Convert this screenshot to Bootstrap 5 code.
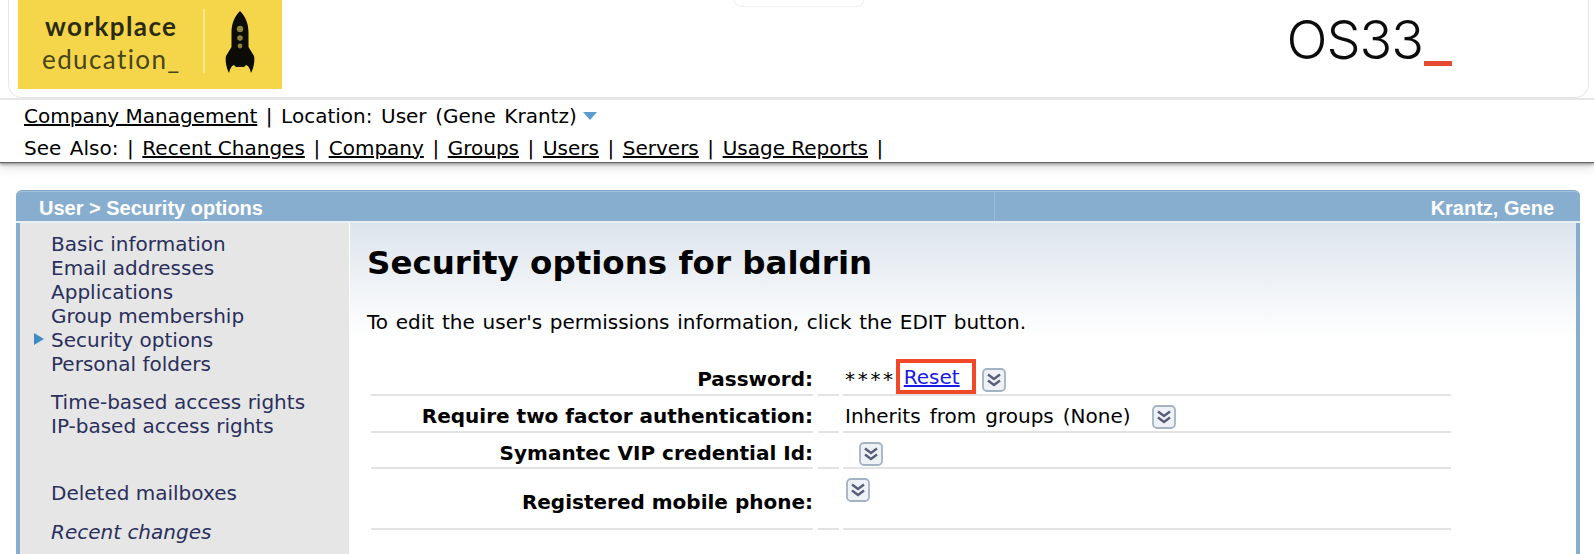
<!DOCTYPE html>
<html lang="en">
<head>
  <meta charset="UTF-8">
  <meta name="viewport" content="width=device-width, initial-scale=1.0">
  <title>Security options</title>
  <link href="https://cdn.jsdelivr.net/npm/bootstrap@5.3.3/dist/css/bootstrap.min.css" rel="stylesheet">
  <style>
    html, body { height: 554px; overflow: hidden; }
    body { font-family: "DejaVu Sans", Verdana, sans-serif; font-size: 20px; color: #000; background: #fff; }
    a { color: inherit; }

    /* logo strip */
    .top-wrap { height: 98px; padding: 0 5px 0 8px; }
    .top-box { height: 98px; border: 1px solid #e6e9e9; border-top: 0; border-radius: 0 0 14px 14px; padding-left: 9px; padding-right: 136px; position: relative; }
    .top-notch { position: absolute; top: 0; left: 725px; width: 130px; height: 7px; border: 1px solid #edf1f1; border-top: 0; border-radius: 0 0 9px 9px; }
    .wp-logo { width: 264px; height: 89px; background: #f5d64b; }
    .wp-words { width: 185px; padding-top: 10px; padding-left: 24px; font-family: Lato, sans-serif; font-size: 26px; line-height: 33px; color: #2b2a12; letter-spacing: 1.4px; white-space: nowrap; }
    .wp-words b { font-weight: 700; display: block; padding-left: 3px; }
    .wp-words span { display: block; color: #4a4517; }
    .wp-bar { width: 2px; height: 64px; margin-top: 9px; background: #fbe88f; }
    .wp-rocket { margin: 11px 0 0 20px; }
    .os-logo { font-family: Inter, "Liberation Sans", sans-serif; font-weight: 300; font-size: 54px; line-height: 1; letter-spacing: -1px; padding-top: 13px; color: #0c0c0c; }
    .os-logo i { display: inline-block; width: 28px; height: 5px; background: #e54b32; margin-left: 1px; vertical-align: -7px; }

    /* nav lines */
    .nav-strip { height: 64px; padding: 1px 0 0 24px; border-top: 2px solid #e6e6e6; box-shadow: 0 1px 1px #666, 0 3px 3px #aaa, 0 7px 10px rgba(0,0,0,.1); line-height: 31.5px; position: relative; word-spacing: 2.2px; white-space: nowrap; }
    .nav-strip a { color: #000; word-spacing: 0; }
    .loc-arrow { display: inline-block; width: 0; height: 0; border-left: 7px solid transparent; border-right: 7px solid transparent; border-top: 8px solid #5a9ccb; margin-left: 6px; vertical-align: 3px; }

    /* panel */
    .main-panel { margin: 28px 14px 0 16px; }
    .panel-title { height: 33px; background: #88aecf; border-top: 1px solid #7ea6c9; border-bottom: 2px solid #e8eff5; border-radius: 6px 6px 0 0; color: #fff; font-family: "Liberation Sans", Arial, sans-serif; font-weight: 700; font-size: 20px; line-height: 34px; box-shadow: inset 0 6px 0 -5px #a5c3dc; }
    .title-left { width: 979px; padding-left: 23px; border-right: 1px solid #9dbcd8; }
    .title-right { flex: 1; text-align: right; padding-right: 26px; }
    .panel-body-row { height: 340px; border-left: 4px solid #88aecf; border-right: 4px solid #88aecf; }
    .side-menu { width: 330px; flex: none; background: #e6e6e6; border-right: 1px solid #fff; padding: 9px 0 0 31px; color: #2a2f5c; line-height: 24px; }
    .side-menu a { display: block; color: #2a2f5c; text-decoration: none; position: relative; }
    .side-menu .is-current::before { content: ""; position: absolute; left: -17px; top: 5px; border-left: 10px solid #3f8cc4; border-top: 6.5px solid transparent; border-bottom: 6.5px solid transparent; }
    .gap-one { margin-top: 14px; }
    .gap-two { margin-top: 43px; }
    .gap-three { margin-top: 15px; }
    .page-area { flex: 1; padding: 20px 0 0 17px; background: linear-gradient(#dce4ec, #fff 115px); }
    .page-area h1 { font-family: "DejaVu Sans", Verdana, sans-serif; font-size: 32.5px; font-weight: 700; line-height: 40px; margin: 0 0 25px; }
    .page-area p { margin: 0 0 24px; line-height: 28px; word-spacing: 1.4px; }

    .perm-row { display: flex; width: 1080px; margin-left: 4px; }
    .perm-label { width: 442px; flex: none; text-align: right; font-weight: 700; border-bottom: 2px solid #e3e3e3; white-space: nowrap; }
    .perm-gap { width: 21px; flex: none; margin-left: 5px; border-bottom: 2px solid #e3e3e3; }
    .perm-value { margin-left: 4px; flex: 1; border-bottom: 2px solid #e3e3e3; padding-left: 2px; white-space: nowrap; word-spacing: 2.7px; }
    .perm-row.r1 { height: 36px; line-height: 38px; }
    .perm-row.r2 { height: 37px; line-height: 40px; }
    .perm-row.r3 { height: 36px; line-height: 40px; }
    .perm-row.r4 { height: 61px; line-height: 66px; }
    .perm-row.r4 .perm-value { line-height: 40px; }
    .stars { letter-spacing: 2.7px; }
    .reset-box { display: inline-block; border: 4px solid #f2482a; height: 35px; width: 80px; padding-left: 4px; line-height: 29px; margin-top: -1px; vertical-align: top; word-spacing: 0; }
    .reset-box a { color: #1a1ae6; }
    .more-btn { display: inline-block; vertical-align: -6px; }
    .pad-btn-z { margin-left: -3px; }
    .pad-btn-a { margin-left: 21px; }
    .pad-btn-b { margin-left: 14px; }
    .pad-btn-c { margin-left: 1px; }
  </style>
</head>
<body>
  <div class="top-wrap">
    <div class="top-box d-flex justify-content-between align-items-start">
      <div class="top-notch"></div>
      <div class="wp-logo d-flex">
        <div class="wp-words"><b>workplace</b><span>education_</span></div>
        <div class="wp-bar"></div>
        <svg class="wp-rocket" width="30" height="62" viewBox="0 0 30 62">
          <path fill="#0b0b08" d="M15 0C9 6 6.500 13 6.500 22v14L1 45c-1 4 0 11 3 17 1-4 2-7 5-8l2 2h8l2-2c3 1 4 4 5 8 3-6 4-13 3-17l-5.500-9V22C23.500 13 21 6 15 0z"/>
          <circle cx="15" cy="18" r="3.200" fill="#8d8338"/>
          <circle cx="15" cy="27" r="2.800" fill="#8d8338"/>
          <circle cx="15" cy="35" r="2.400" fill="#8d8338"/>
        </svg>
      </div>
      <div class="os-logo">OS33<i></i></div>
    </div>
  </div>

  <div class="nav-strip">
    <div><a href="#">Company Management</a> | Location: User (Gene Krantz)<span class="loc-arrow"></span></div>
    <div>See Also: | <a href="#">Recent Changes</a> | <a href="#">Company</a> | <a href="#">Groups</a> | <a href="#">Users</a> | <a href="#">Servers</a> | <a href="#">Usage Reports</a> |</div>
  </div>

  <div class="main-panel">
    <div class="panel-title d-flex">
      <span class="title-left">User &gt; Security options</span>
      <span class="title-right">Krantz, Gene</span>
    </div>
    <div class="panel-body-row d-flex">
      <div class="side-menu">
        <a href="#">Basic information</a>
        <a href="#">Email addresses</a>
        <a href="#">Applications</a>
        <a href="#">Group membership</a>
        <a href="#" class="is-current">Security options</a>
        <a href="#">Personal folders</a>
        <a href="#" class="gap-one">Time-based access rights</a>
        <a href="#">IP-based access rights</a>
        <a href="#" class="gap-two">Deleted mailboxes</a>
        <a href="#" class="gap-three fst-italic">Recent changes</a>
      </div>
      <div class="page-area">
        <h1>Security options for baldrin</h1>
        <p>To edit the user's permissions information, click the EDIT button.</p>

        <svg width="0" height="0" class="position-absolute">
          <symbol id="more-ico" viewBox="0 0 24 24">
            <rect x="1" y="1" width="22" height="22" rx="4" fill="#eef2f6" stroke="#a3b3c2" stroke-width="1.800"/>
            <path d="M6 6.500l6 4.500 6-4.500M6 12.500l6 4.500 6-4.500" fill="none" stroke="#585d7a" stroke-width="2.400"/>
          </symbol>
        </svg>

        <div class="perm-row r1">
          <div class="perm-label">Password:</div>
          <div class="perm-gap"></div>
          <div class="perm-value"><span class="stars">****</span><span class="reset-box"><a href="#">Reset</a></span> <svg class="more-btn pad-btn-z" width="24" height="24"><use href="#more-ico"/></svg></div>
        </div>
        <div class="perm-row r2">
          <div class="perm-label">Require two factor authentication:</div>
          <div class="perm-gap"></div>
          <div class="perm-value">Inherits from groups (None)<svg class="more-btn pad-btn-a" width="24" height="24"><use href="#more-ico"/></svg></div>
        </div>
        <div class="perm-row r3">
          <div class="perm-label">Symantec VIP credential Id:</div>
          <div class="perm-gap"></div>
          <div class="perm-value"><svg class="more-btn pad-btn-b" width="24" height="24"><use href="#more-ico"/></svg></div>
        </div>
        <div class="perm-row r4">
          <div class="perm-label">Registered mobile phone:</div>
          <div class="perm-gap"></div>
          <div class="perm-value"><svg class="more-btn pad-btn-c" width="24" height="24"><use href="#more-ico"/></svg></div>
        </div>
      </div>
    </div>
  </div>
  <script src="https://cdn.jsdelivr.net/npm/bootstrap@5.3.3/dist/js/bootstrap.bundle.min.js"></script>
</body>
</html>
